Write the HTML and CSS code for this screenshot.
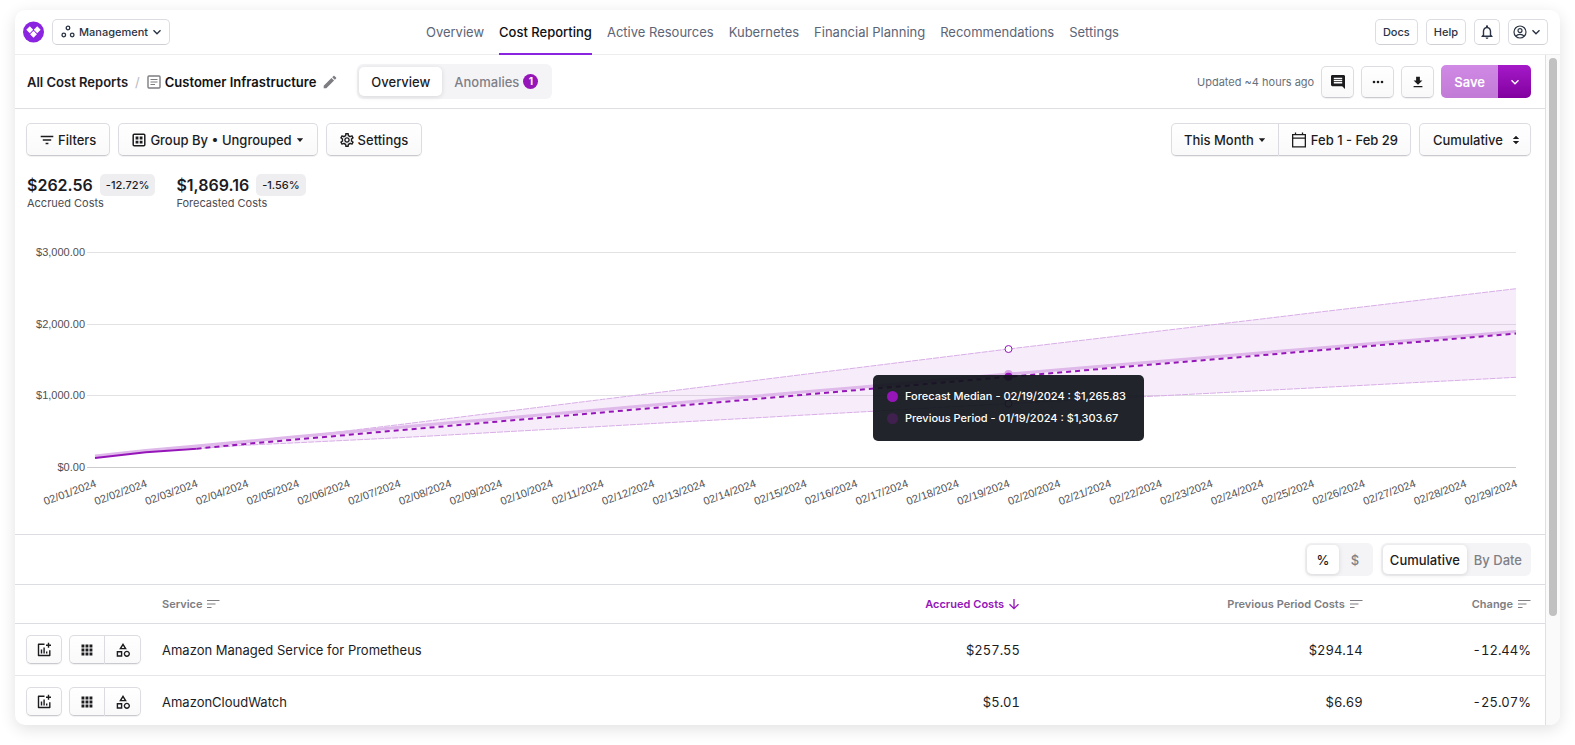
FILE: index.html
```html
<!DOCTYPE html>
<html lang="en">
<head>
<meta charset="utf-8">
<meta name="viewport" content="width=device-width, initial-scale=1">
<title>Customer Infrastructure</title>
<link rel="stylesheet" href="styles.css">
</head>
<body>
<svg class="sprite" aria-hidden="true">
  <symbol id="i-logo" viewBox="0 0 22 22"><circle cx="11" cy="11" r="11" fill="#8a24e0"/><g fill="#fff"><path d="M7.1 5.1l3.6 3.6-3.6 3.6-3.6-3.6z"/><path d="M14.9 5.1l3.6 3.6-3.6 3.6-3.6-3.6z"/><path d="M11 9.8l3.6 3.6-3.6 3.6-3.6-3.6z"/></g></symbol>
  <symbol id="i-nodes" viewBox="0 0 14 14"><g fill="none" stroke="currentColor" stroke-width="1.3"><circle cx="7" cy="3" r="1.8"/><circle cx="2.8" cy="10" r="1.8"/><circle cx="11.2" cy="10" r="1.8"/></g></symbol>
  <symbol id="i-chevron" viewBox="0 0 10 10"><path d="M1.5 3.2L5 6.7l3.5-3.5" fill="none" stroke="currentColor" stroke-width="1.4"/></symbol>
  <symbol id="i-bell" viewBox="3 2 18 20"><path fill="currentColor" d="M12 22c1.1 0 2-.9 2-2h-4c0 1.1.9 2 2 2zm6-6v-5c0-3.07-1.63-5.64-4.5-6.32V4c0-.83-.67-1.5-1.5-1.5s-1.5.67-1.5 1.5v.68C7.64 5.36 6 7.92 6 11v5l-2 2v1h16v-1l-2-2zm-2 1H8v-6c0-2.48 1.51-4.5 4-4.5s4 2.02 4 4.5v6z"/></symbol>
  <symbol id="i-user" viewBox="0 0 14 14"><g fill="none" stroke="currentColor" stroke-width="1.2"><circle cx="7" cy="7" r="6"/><circle cx="7" cy="5.6" r="2"/><path d="M2.9 11.2C4 9.7 5.4 9.3 7 9.3s3 .4 4.1 1.9"/></g></symbol>
  <symbol id="i-report" viewBox="0 0 14 14"><g fill="none" stroke="currentColor" stroke-width="1.4"><rect x="1" y="1" width="12" height="12" rx="1"/><path d="M3.500 4.500h7M3.500 7h7M3.500 9.500h4.500" stroke-width="1.1"/></g></symbol>
  <symbol id="i-pencil" viewBox="2 2 20 20"><path fill="currentColor" d="M3 17.250V21h3.750L17.810 9.940l-3.750-3.750L3 17.250zM20.710 7.040c.39-.39.39-1.020 0-1.410l-2.340-2.340c-.39-.39-1.020-.39-1.410 0l-1.830 1.830 3.750 3.750 1.830-1.830z"/></symbol>
  <symbol id="i-comment" viewBox="2 2 20 20"><path fill="currentColor" d="M21.990 4c0-1.100-.89-2-1.990-2H4c-1.100 0-2 .9-2 2v12c0 1.100.9 2 2 2h14l4 4-.01-18zM18 14H6v-2h12v2zm0-3H6V9h12v2zm0-3H6V6h12v2z"/></symbol>
  <symbol id="i-dots" viewBox="0 0 12 12"><g fill="currentColor"><circle cx="2" cy="6" r="1.300"/><circle cx="6" cy="6" r="1.300"/><circle cx="10" cy="6" r="1.300"/></g></symbol>
  <symbol id="i-download" viewBox="4 2 16 19"><path fill="currentColor" d="M19 9h-4V3H9v6H5l7 7 7-7zM5 18v2h14v-2H5z"/></symbol>
  <symbol id="i-filter" viewBox="2 2 20 20"><path fill="currentColor" d="M10 18h4v-2h-4v2zM3 6v2h18V6H3zm3 7h12v-2H6v2z"/></symbol>
  <symbol id="i-group" viewBox="0 0 14 14"><rect x="1.200" y="1.200" width="11.600" height="11.600" rx="1" fill="none" stroke="currentColor" stroke-width="1.500"/><path fill="currentColor" d="M3.600 3.600h2.800v2.800H3.600zM7.700 3.600h2.800v2.800H7.700zM3.600 7.700h2.800v2.800H3.600zM7.700 7.700h2.800v2.800H7.700z"/></symbol>
  <symbol id="i-gear" viewBox="2 2 20 20"><path fill="currentColor" d="M19.430 12.980c.04-.32.07-.64.07-.98 0-.34-.03-.66-.07-.98l2.110-1.650c.19-.15.24-.42.12-.64l-2-3.460c-.09-.16-.26-.25-.44-.25-.06 0-.12.01-.17.03l-2.490 1c-.52-.4-1.080-.73-1.690-.98l-.38-2.650C14.460 2.180 14.250 2 14 2h-4c-.25 0-.46.18-.49.42l-.38 2.650c-.61.25-1.170.59-1.690.98l-2.490-1c-.06-.02-.12-.03-.18-.03-.17 0-.34.09-.43.25l-2 3.460c-.13.22-.07.49.12.64l2.110 1.650c-.04.32-.07.65-.07.98 0 .33.03.66.07.98l-2.110 1.650c-.19.15-.24.42-.12.64l2 3.460c.09.16.26.25.44.25.06 0 .12-.01.17-.03l2.490-1c.52.4 1.080.73 1.690.98l.38 2.650c.03.24.24.42.49.42h4c.25 0 .46-.18.49-.42l.38-2.650c.61-.25 1.170-.59 1.690-.98l2.490 1c.06.02.12.03.18.03.17 0 .34-.09.43-.25l2-3.460c.12-.22.07-.49-.12-.64l-2.110-1.650zm-1.980-1.710c.04.31.05.52.05.73 0 .21-.02.43-.05.73l-.14 1.130.89.7 1.080.84-.7 1.210-1.270-.51-1.040-.42-.9.68c-.43.32-.84.56-1.250.73l-1.060.43-.16 1.130-.2 1.350h-1.400l-.19-1.350-.16-1.130-1.060-.43c-.43-.18-.83-.41-1.230-.71l-.91-.7-1.060.43-1.270.51-.7-1.210 1.080-.84.89-.7-.14-1.130c-.03-.31-.05-.54-.05-.74s.02-.43.05-.73l.14-1.130-.89-.7-1.080-.84.7-1.210 1.270.51 1.040.42.9-.68c.43-.32.84-.56 1.250-.73l1.060-.43.16-1.130.2-1.350h1.390l.19 1.350.16 1.130 1.060.43c.43.18.83.41 1.230.71l.91.7 1.060-.43 1.270-.51.7 1.210-1.070.85-.89.7.14 1.130zM12 8c-2.210 0-4 1.790-4 4s1.790 4 4 4 4-1.790 4-4-1.790-4-4-4zm0 6c-1.100 0-2-.9-2-2s.9-2 2-2 2 .9 2 2-.9 2-2 2z"/></symbol>
  <symbol id="i-caret" viewBox="0 0 8 8"><path fill="currentColor" d="M.8 2.200h6.400L4 5.900z"/></symbol>
  <symbol id="i-calendar" viewBox="0 0 16 16"><path fill="none" stroke="currentColor" stroke-width="1.300" d="M1.650 2.650h12.700v12.200H1.650zM1.650 6.100h12.700M4.500 .5v2.600M11.500 .5v2.600"/></symbol>
  <symbol id="i-updown" viewBox="0 0 8 10"><path fill="currentColor" d="M.8 4h6.400L4 .8zM.8 6h6.400L4 9.200z"/></symbol>
  <symbol id="i-sort" viewBox="0 0 14 10"><path fill="none" stroke="currentColor" stroke-width="1.200" d="M1 1.500h12.500M1 5h8.500M1 8.500h4.500"/></symbol>
  <symbol id="i-down" viewBox="0 0 12 12"><path fill="none" stroke="currentColor" stroke-width="1.300" d="M6 1v9.500M1.500 6.200L6 10.700l4.500-4.500"/></symbol>
  <symbol id="i-addchart" viewBox="0 0 16 16"><path fill="none" stroke="currentColor" stroke-width="1.400" stroke-linejoin="round" d="M8.500 2.200H2.500v11.300h11.300V8.200M5.500 11.500V7.500M8.100 11.500V5.500M10.700 11.500V9.500M12.500 .8v5M10 3.300h5"/></symbol>
  <symbol id="i-apps" viewBox="0 0 12 12"><path fill="currentColor" d="M0.500 0.500h2.900v2.900H0.500zM4.500 0.500h2.900v2.900H4.500zM8.500 0.500h2.900v2.900H8.500zM0.500 4.500h2.900v2.900H0.500zM4.500 4.500h2.900v2.900H4.500zM8.500 4.500h2.900v2.900H8.500zM0.500 8.500h2.900v2.900H0.500zM4.500 8.500h2.900v2.900H4.500zM8.500 8.500h2.900v2.900H8.500z"/></symbol>
  <symbol id="i-shapes" viewBox="2 2 20 20"><path fill="currentColor" d="M12 2l-5.500 9h11L12 2zm0 3.840L13.930 9h-3.870L12 5.840zM17.500 13c-2.490 0-4.500 2.010-4.500 4.500s2.010 4.500 4.500 4.500 4.500-2.010 4.500-4.500-2.010-4.500-4.500-4.500zm0 7c-1.380 0-2.500-1.120-2.500-2.500s1.120-2.500 2.500-2.500 2.500 1.120 2.500 2.500-1.120 2.500-2.500 2.500zM3 21.500h8v-8H3v8zm2-6h4v4H5v-4z"/></symbol>
</svg>

<div class="window">
  <header class="topbar">
    <div class="brand">
      <a class="logo" href="#" aria-label="Home"><svg><use href="#i-logo"/></svg></a>
      <button class="chip chip-workspace" type="button"><svg class="ic14"><use href="#i-nodes"/></svg>Management<svg class="ic10"><use href="#i-chevron"/></svg></button>
    </div>
    <nav class="mainnav">
      <a href="#">Overview</a>
      <a href="#" class="current" aria-current="page">Cost Reporting</a>
      <a href="#">Active Resources</a>
      <a href="#">Kubernetes</a>
      <a href="#">Financial Planning</a>
      <a href="#">Recommendations</a>
      <a href="#">Settings</a>
    </nav>
    <div class="tools">
      <button class="chip" type="button">Docs</button>
      <button class="chip" type="button">Help</button>
      <button class="chip chip-bell" type="button" aria-label="Notifications"><svg class="ic14"><use href="#i-bell"/></svg></button>
      <button class="chip chip-user" type="button" aria-label="Account"><svg class="ic14"><use href="#i-user"/></svg><svg class="ic10"><use href="#i-chevron"/></svg></button>
    </div>
  </header>

  <div class="viewport">
    <main class="content">
      <div class="titlebar">
        <div class="crumbs">
          <a href="#">All Cost Reports</a>
          <span class="slash">/</span>
          <svg class="ic14 muted"><use href="#i-report"/></svg>
          <h1>Customer Infrastructure</h1>
          <button class="bare" type="button" aria-label="Rename"><svg class="ic14"><use href="#i-pencil"/></svg></button>
        </div>
        <div class="segment segment-tabs">
          <button class="on" type="button">Overview</button>
          <button type="button">Anomalies<span class="count">1</span></button>
        </div>
        <div class="actions">
          <span class="updated">Updated ~4 hours ago</span>
          <button class="btn btn-square" type="button" aria-label="Comments"><svg class="ic14"><use href="#i-comment"/></svg></button>
          <button class="btn btn-square" type="button" aria-label="More"><svg class="ic12"><use href="#i-dots"/></svg></button>
          <button class="btn btn-square" type="button" aria-label="Download"><svg class="ic12"><use href="#i-download"/></svg></button>
          <div class="save">
            <button class="save-main" type="button">Save</button>
            <button class="save-more" type="button" aria-label="Save options"><svg class="ic10"><use href="#i-chevron"/></svg></button>
          </div>
        </div>
      </div>

      <div class="filters">
        <button class="btn" type="button"><svg class="ic14"><use href="#i-filter"/></svg>Filters</button>
        <button class="btn" type="button"><svg class="ic14"><use href="#i-group"/></svg>Group By • Ungrouped<svg class="ic8"><use href="#i-caret"/></svg></button>
        <button class="btn" type="button"><svg class="ic14"><use href="#i-gear"/></svg>Settings</button>
        <div class="joined push">
          <button class="btn" type="button">This Month<svg class="ic8"><use href="#i-caret"/></svg></button>
          <button class="btn" type="button"><svg class="ic16"><use href="#i-calendar"/></svg>Feb 1 - Feb 29</button>
        </div>
        <div class="picker">
          <select class="btn" aria-label="Chart mode"><option>Cumulative</option><option>By Date</option></select>
          <svg class="picker-arrows"><use href="#i-updown"/></svg>
        </div>
      </div>

      <div class="stats">
        <div class="stat">
          <div class="stat-top"><strong>$262.56</strong><span class="delta">-12.72%</span></div>
          <div class="stat-label">Accrued Costs</div>
        </div>
        <div class="stat">
          <div class="stat-top"><strong>$1,869.16</strong><span class="delta">-1.56%</span></div>
          <div class="stat-label">Forecasted Costs</div>
        </div>
      </div>

      <div class="chart">
        <svg id="plot" class="plot" role="img" aria-label="Cumulative costs by day"></svg>
        <div class="tooltip" id="tooltip">
          <div class="tip-row"><i class="dot dot-forecast"></i>Forecast Median - 02/19/2024 : $1,265.83</div>
          <div class="tip-row"><i class="dot dot-previous"></i>Previous Period - 01/19/2024 : $1,303.67</div>
        </div>
      </div>

      <div class="tablebar">
        <div class="segment segment-unit">
          <button class="on" type="button">%</button>
          <button type="button">$</button>
        </div>
        <div class="segment segment-mode">
          <button class="on" type="button">Cumulative</button>
          <button type="button">By Date</button>
        </div>
      </div>

      <table class="costs">
        <colgroup><col class="c-actions"><col><col class="c-accrued"><col class="c-previous"><col class="c-change"></colgroup>
        <thead>
          <tr>
            <td></td>
            <th scope="col"><button type="button">Service<svg class="sort"><use href="#i-sort"/></svg></button></th>
            <th scope="col" class="num sorted"><button type="button">Accrued Costs<svg class="ic12"><use href="#i-down"/></svg></button></th>
            <th scope="col" class="num"><button type="button">Previous Period Costs<svg class="sort"><use href="#i-sort"/></svg></button></th>
            <th scope="col" class="num"><button type="button">Change<svg class="sort"><use href="#i-sort"/></svg></button></th>
          </tr>
        </thead>
        <tbody>
          <tr>
            <td><div class="rowtools"><button class="btn" type="button" aria-label="Add to dashboard"><svg class="ic16"><use href="#i-addchart"/></svg></button><div class="joined"><button class="btn" type="button" aria-label="Group"><svg class="ic12"><use href="#i-apps"/></svg></button><button class="btn" type="button" aria-label="Categories"><svg class="ic14"><use href="#i-shapes"/></svg></button></div></div></td>
            <td>Amazon Managed Service for Prometheus</td>
            <td class="num">$257.55</td><td class="num">$294.14</td><td class="num">-12.44%</td>
          </tr>
          <tr>
            <td><div class="rowtools"><button class="btn" type="button" aria-label="Add to dashboard"><svg class="ic16"><use href="#i-addchart"/></svg></button><div class="joined"><button class="btn" type="button" aria-label="Group"><svg class="ic12"><use href="#i-apps"/></svg></button><button class="btn" type="button" aria-label="Categories"><svg class="ic14"><use href="#i-shapes"/></svg></button></div></div></td>
            <td>AmazonCloudWatch</td>
            <td class="num">$5.01</td><td class="num">$6.69</td><td class="num">-25.07%</td>
          </tr>
        </tbody>
      </table>
    </main>
    <div class="rail"><div class="thumb"></div></div>
  </div>
</div>
<script src="chart.js"></script>
</body>
</html>
```
FILE: styles.css
```css
*, *::before, *::after { box-sizing: border-box; }

html, body { height: 100%; }

body {
  margin: 0;
  padding: 10px 15px 20px;
  background: #fff;
  color: #1c1c1f;
  font: 13px/16px Inter, "Liberation Sans", sans-serif;
  overflow: hidden;
}

button, select {
  font: inherit;
  color: inherit;
  margin: 0;
  padding: 0;
  border: 0;
  background: none;
}

a { color: inherit; text-decoration: none; }

svg { display: block; flex: none; }

.sprite { position: absolute; width: 0; height: 0; }
.ic8 { width: 8px; height: 8px; }
.ic10 { width: 10px; height: 10px; }
.ic12 { width: 12px; height: 12px; }
.ic14 { width: 14px; height: 14px; }
.ic16 { width: 16px; height: 16px; }
.muted { color: #7d7d82; }

.window {
  display: flex;
  flex-direction: column;
  height: 100%;
  border-radius: 10px;
  background: #fff;
  box-shadow: 0 4px 16px rgba(0, 0, 0, .12);
  overflow: hidden;
}

/* Top bar */
.topbar {
  display: flex;
  flex: none;
  justify-content: space-between;
  height: 45px;
  padding: 0 12px 0 8px;
  border-bottom: 1px solid #ededf0;
}
.brand, .tools { display: flex; align-items: center; gap: 8px; }
.logo svg { width: 21px; height: 22px; }
.chip {
  display: flex;
  align-items: center;
  justify-content: center;
  height: 26px;
  padding: 0 7px 1px;
  border: 1px solid #dcdce3;
  border-bottom-color: #cfcfd6;
  border-radius: 5px;
  background: #fff;
  color: #2b3444;
  font-size: 11px;
  font-weight: 500;
}
.chip-workspace { gap: 4px; padding: 0 7px 1px 8px; }
.chip-bell { padding: 0 5px; }
.chip-user { gap: 4px; padding: 0 6px 0 4px; }
.mainnav { display: flex; gap: 15px; }
.mainnav a {
  display: flex;
  align-items: center;
  height: 45px;
  border-bottom: 2px solid transparent;
  color: #5d6475;
}
.mainnav .current {
  border-bottom-color: #8a24e0;
  color: #0d0f14;
  font-weight: 500;
}

/* Scrolling area */
.viewport { display: flex; flex: 1; min-height: 0; }
.content { flex: 1; min-width: 0; overflow: hidden; }
.rail {
  flex: none;
  width: 15px;
  padding: 3px;
  border-left: 1px solid #e0e0e4;
  background: #fafafa;
}
.thumb { width: 8px; height: 84%; border-radius: 4px; background: #c1c1c1; }

/* Title row */
.titlebar {
  display: flex;
  align-items: center;
  height: 54px;
  padding: 0 14px 0 12px;
  border-bottom: 1px solid #dedee3;
}
.crumbs { display: flex; align-items: center; font-weight: 600; }
.crumbs h1 { margin: 0 7px 0 4px; font: inherit; color: #111; }
.slash { margin: 0 7px; color: #b9b9c0; font-weight: 400; }
.bare { color: #7d7d82; }

.segment {
  display: flex;
  border-radius: 6px;
  background: #f4f4f7;
  color: #7f7f86;
  font-weight: 500;
}
.segment button {
  display: flex;
  align-items: center;
  justify-content: center;
  gap: 4px;
  height: 29px;
  padding: 0 12px;
  border-radius: 5px;
}
.segment .on {
  background: #fff;
  color: #1c1c1f;
  box-shadow: 0 1px 5px rgba(0, 0, 0, .12);
}
.segment-tabs { margin-left: 20px; padding: 3px 2px; }
.segment-unit { padding: 2px; }
.segment-unit button { width: 32px; padding: 0; }
.segment-mode { padding: 2px; }
.segment-mode button { padding: 0 7px; }
.count {
  width: 15px;
  border-radius: 8px;
  background: #9515b9;
  color: #fff;
  font-size: 10px;
  font-weight: 700;
  line-height: 15px;
  text-align: center;
}

.actions { display: flex; align-items: center; gap: 7px; margin-left: auto; }
.updated { color: #66707a; font-size: 11px; }
.btn {
  display: flex;
  align-items: center;
  justify-content: center;
  gap: 4px;
  height: 33px;
  padding: 0 13px;
  border: 1px solid #dcdce2;
  border-bottom-color: #c9c9d0;
  border-radius: 5px;
  background: linear-gradient(#fff, #f9f9fa);
  box-shadow: 0 1px 1px rgba(0, 0, 0, .06);
  color: #1c1c1f;
  font-weight: 500;
}
.btn-square { width: 33px; height: 32px; padding: 0; }
.save { display: flex; height: 33px; border-radius: 5px; overflow: hidden; color: #fff; }
.save-main { padding: 0 13px; background: linear-gradient(#d08ae6, #c17bd6); font-weight: 600; }
.save-more { display: flex; align-items: center; justify-content: center; width: 33px; background: linear-gradient(#a41ac8, #82009f); }

/* Filter row */
.filters { display: flex; gap: 8px; padding: 14px 14px 0 11px; }
.push { margin-left: auto; }
.joined { display: flex; }
.joined .btn:first-child { border-radius: 5px 0 0 5px; }
.joined .btn:last-child { border-left: 0; border-radius: 0 5px 5px 0; }
.filters .joined .btn { padding: 0 12px; }
.picker { position: relative; }
.picker .btn { width: 112px; appearance: none; }
.picker-arrows { position: absolute; top: 12px; right: 11px; width: 8px; height: 10px; pointer-events: none; }

/* Totals */
.stats { display: flex; gap: 21px; padding: 17px 12px 0; }
.stat-top { display: flex; align-items: center; gap: 7px; height: 23px; }
.stat-top strong { font-size: 16px; font-weight: 600; }
.delta {
  padding: 3px 6px;
  border-radius: 5px;
  background: #eeeef0;
  font-size: 11px;
  font-weight: 500;
}
.stat-label { color: #4c4c52; font-size: 11px; line-height: 14px; }

/* Chart */
.chart { position: relative; height: 325px; border-bottom: 1px solid #dcdce3; }
.plot { width: 100%; height: 100%; }
.plot text { fill: #505054; font: 11px "Liberation Sans", Arial, sans-serif; }
.grid { stroke: #e2e2e4; }
.axis { stroke: #cbcbce; }
.band { fill: rgba(149, 21, 185, .08); }
.bound { fill: none; stroke: #d9aee8; stroke-dasharray: 6 1; }
.line-previous { fill: none; stroke: #dfb9ea; stroke-width: 3; }
.line-actual { fill: none; stroke: #9515b9; stroke-width: 2; }
.line-forecast { fill: none; stroke: #9515b9; stroke-width: 2; stroke-dasharray: 5 4; }
.ring { fill: #fff; stroke: #9515b9; }
.mark-previous { fill: #d79fe6; }
.mark-forecast { fill: #9515b9; }
.tooltip {
  position: absolute;
  display: flex;
  flex-direction: column;
  gap: 6px;
  padding: 13px 18px 15px 14px;
  border-radius: 5px;
  background: rgba(16, 20, 27, .93);
  color: #fff;
  font-size: 11px;
  font-weight: 500;
  white-space: nowrap;
}
.tip-row { display: flex; align-items: center; gap: 7px; }
.dot { width: 11px; height: 11px; border-radius: 50%; }
.dot-forecast { background: #9515b9; }
.dot-previous { background: #40204f; }

/* Table */
.tablebar {
  display: flex;
  align-items: center;
  justify-content: flex-end;
  gap: 8px;
  height: 50px;
  padding: 0 14px 0 0;
  border-bottom: 1px solid #dcdce3;
}
.costs { width: 100%; border-collapse: separate; border-spacing: 0; table-layout: fixed; }
.c-actions { width: 135px; }
.c-accrued { width: 22%; }
.c-previous { width: 22.4%; }
.c-change { width: 11%; }
.costs th, .costs td { height: 52px; padding: 0 14px 0 12px; border-bottom: 1px solid #e6e6ea; text-align: left; }
.costs td:first-child { padding: 0 0 0 11px; }
.costs thead th, .costs thead td { height: 39px; border-bottom-color: #dcdce3; color: #7d7d82; font-size: 11px; font-weight: 600; }
.costs th button { display: inline-flex; align-items: center; gap: 4px; }
.costs .num { text-align: right; font-variant-numeric: tabular-nums; }
.costs thead .sorted { color: #9515b9; }
.sort { width: 14px; height: 10px; }
.rowtools { display: flex; gap: 7px; }
.rowtools .btn { width: 36px; height: 29px; padding: 0; }
```
FILE: chart.js
```js
(function () {
  var NS = 'http://www.w3.org/2000/svg';
  var plot = document.getElementById('plot');
  var tooltip = document.getElementById('tooltip');
  var DAYS = 29;
  var TOP = 42.5, ZERO = 257.5, LEFT = 80, RIGHT = 29, HOVER = 18;

  // Fills the gaps between known [day, value] points with straight segments.
  function series(points) {
    var out = [];
    for (var i = 0; i < points.length - 1; i++) {
      var a = points[i], b = points[i + 1];
      for (var d = a[0]; d < b[0]; d++) out.push([d, a[1] + (b[1] - a[1]) * (d - a[0]) / (b[0] - a[0])]);
    }
    out.push(points[points.length - 1]);
    return out;
  }

  var actual = series([[1, 133], [2, 214], [3, 262.56]]);
  var forecast = series([[3, 262.56], [4, 330], [7, 520], [19, 1265.83], [29, 1869.16]]);
  var previous = series([[1, 160], [2, 238], [3, 300.83], [7, 562], [19, 1303.67], [29, 1898.8]]);
  var upper = series([[3, 262.56], [5, 430], [7, 598], [19, 1653], [29, 2495]]);
  var lower = series([[3, 262.56], [4, 312], [7, 416], [19, 890], [29, 1258]]);

  function add(tag, attrs, text) {
    var el = document.createElementNS(NS, tag);
    for (var k in attrs) el.setAttribute(k, attrs[k]);
    if (text) el.textContent = text;
    plot.appendChild(el);
  }

  function draw() {
    var width = plot.clientWidth;
    var step = (width - LEFT - RIGHT) / (DAYS - 1);
    function x(day) { return LEFT + (day - 1) * step; }
    function y(v) { return ZERO - v * (ZERO - TOP) / 3000; }
    function path(s) {
      return s.map(function (p, i) { return (i ? 'L' : 'M') + x(p[0]).toFixed(1) + ' ' + y(p[1]).toFixed(1); }).join('');
    }

    plot.textContent = '';
    [3000, 2000, 1000, 0].forEach(function (v) {
      var line = Math.floor(y(v)) + 0.5;
      add('line', { 'class': v ? 'grid' : 'axis', x1: 72, x2: width - RIGHT, y1: line, y2: line });
      add('text', { x: 70, y: line + 3, 'text-anchor': 'end' }, '$' + v.toLocaleString('en-US') + '.00');
    });
    for (var d = 1; d <= DAYS; d++) {
      var tx = x(d) + 2, ty = ZERO + 19;
      add('text', { 'text-anchor': 'end', transform: 'translate(' + tx.toFixed(1) + ' ' + ty + ') rotate(-20)' },
        '02/' + (d < 10 ? '0' : '') + d + '/2024');
    }
    add('path', { 'class': 'band', d: path(upper) + path(lower.slice().reverse()).replace('M', 'L') + 'Z' });
    add('path', { 'class': 'bound', d: path(upper) });
    add('path', { 'class': 'bound', d: path(lower) });
    add('path', { 'class': 'line-previous', d: path(previous) });
    add('path', { 'class': 'line-forecast', d: path(forecast) });
    add('path', { 'class': 'line-actual', d: path(actual) });
    add('circle', { 'class': 'ring', cx: x(19), cy: y(upper[16][1]), r: 3.5 });
    add('circle', { 'class': 'ring', cx: x(19), cy: y(lower[16][1]), r: 3.5 });
    add('circle', { 'class': 'mark-previous', cx: x(19), cy: y(previous[HOVER][1]), r: 4 });
    add('circle', { 'class': 'mark-forecast', cx: x(19), cy: y(forecast[16][1]), r: 4 });

    tooltip.style.left = Math.round(x(19) - tooltip.offsetWidth / 2) + 'px';
    tooltip.style.top = Math.round(y(forecast[16][1])) - 2 + 'px';
  }

  draw();
  window.addEventListener('resize', draw);
})();
```
